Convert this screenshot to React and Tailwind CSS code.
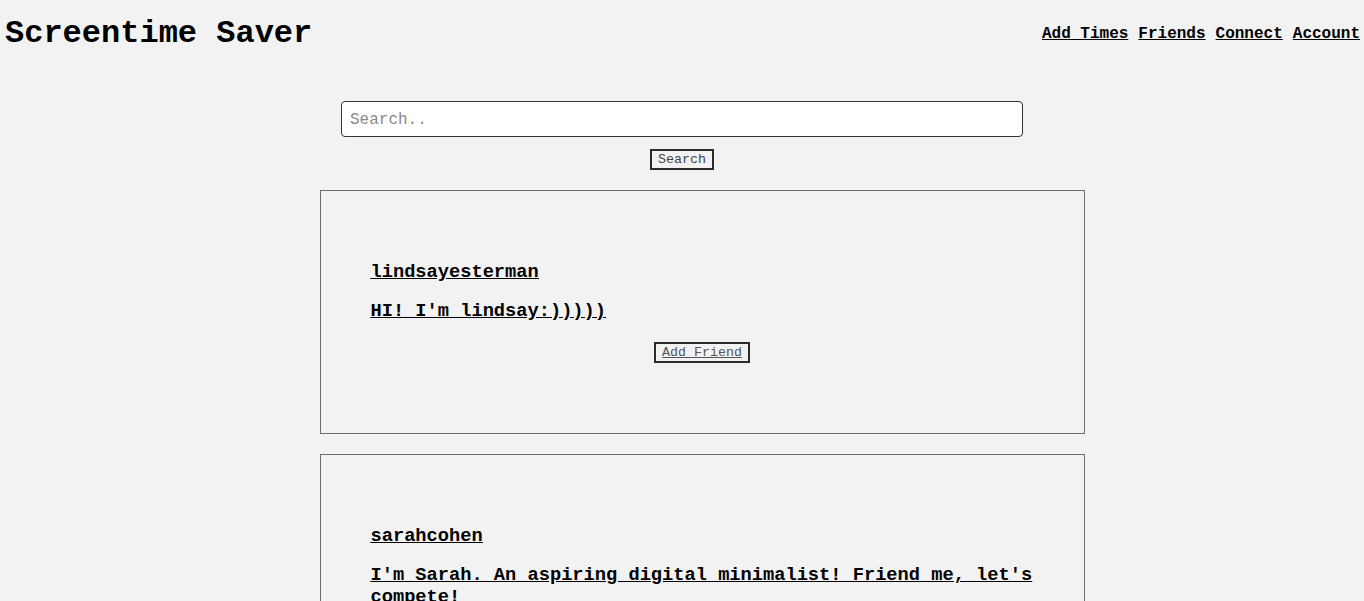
import React from 'react';

const users = [
  { id: 1, username: 'lindsayesterman', bio: "HI! I'm lindsay:)))))" },
  { id: 2, username: 'sarahcohen', bio: "I'm Sarah. An aspiring digital minimalist! Friend me, let's compete!" },
];

function UserCard({ username, bio }) {
  return (
    <div className="w-[765px] border border-[#6e6e6e] px-[50px] pt-[50px] pb-[70px]">
      <h3 className="mt-[20px] mb-[17px] text-[18.7px] leading-[22px] font-bold underline">
        <a href="#">{username}</a>
      </h3>
      <h3 className="mt-0 mb-0 text-[18.7px] leading-[22px] font-bold underline">
        <a href="#">{bio}</a>
      </h3>
      <div className="flex justify-center mt-[20px]">
        <button className="h-[21px] px-[6px] text-[13.3px] leading-none text-[#555] underline bg-[#f2f2f2] border-2 border-[#2b2b2b]">
          Add Friend
        </button>
      </div>
    </div>
  );
}

export default function App() {
  return (
    <div className="min-h-screen bg-[#f2f2f2] text-black font-['Liberation_Mono','Courier_New',monospace]">
      <header className="flex justify-between items-center h-[68px] pl-[5px] pr-[4px]">
        <h1 className="text-[32px] leading-[36px] font-bold">Screentime Saver</h1>
        <nav className="flex gap-[10px] text-[16px] font-bold">
          <a href="#" className="underline">Add Times</a>
          <a href="#" className="underline">Friends</a>
          <a href="#" className="underline">Connect</a>
          <a href="#" className="underline">Account</a>
        </nav>
      </header>

      <div className="flex flex-col items-center mt-[33px]">
        <input
          type="text"
          placeholder="Search.."
          className="w-[682px] h-[36px] px-[8px] pt-[2px] bg-white border border-[#333] rounded-[4px] text-[16px] placeholder:text-[#8a8a8a] outline-none"
        />
        <button className="mt-[12px] h-[21px] px-[6px] text-[13.3px] leading-none text-[#444] bg-[#f2f2f2] border-2 border-[#2b2b2b]">
          Search
        </button>
      </div>

      <div className="flex flex-col items-center gap-[20px] pl-[40px] mt-[20px] pb-[20px]">
        {users.map(u => (
          <UserCard key={u.id} {...u} />
        ))}
      </div>
    </div>
  );
}
